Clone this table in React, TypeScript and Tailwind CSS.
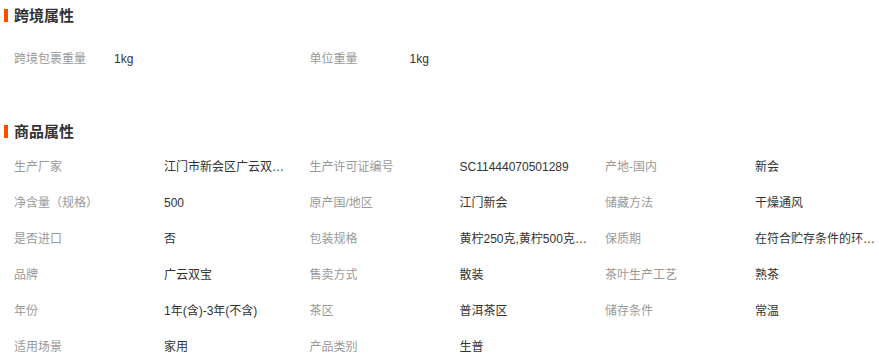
import React from "react";

const font = { fontFamily: '"Liberation Sans", "Noto Sans CJK SC", sans-serif' };

type Item = [string, string];

const cross: Item[] = [
  ["跨境包裹重量", "1kg"],
  ["单位重量", "1kg"],
];

const goods: Item[] = [
  ["生产厂家", "江门市新会区广云双宝茶叶有限公司"],
  ["生产许可证编号", "SC11444070501289"],
  ["产地-国内", "新会"],
  ["净含量（规格）", "500"],
  ["原产国/地区", "江门新会"],
  ["储藏方法", "干燥通风"],
  ["是否进口", "否"],
  ["包装规格", "黄柠250克,黄柠500克,青柠250克"],
  ["保质期", "在符合贮存条件的环境下长期保存"],
  ["品牌", "广云双宝"],
  ["售卖方式", "散装"],
  ["茶叶生产工艺", "熟茶"],
  ["年份", "1年(含)-3年(不含)"],
  ["茶区", "普洱茶区"],
  ["储存条件", "常温"],
  ["适用场景", "家用"],
  ["产品类别", "生普"],
];

function Header({ title, cls }: { title: string; cls: string }) {
  return (
    <div className={`flex items-center pl-[4px] ${cls}`}>
      <div className="w-[4px] h-[13px] bg-[#ff4a00]" />
      <div className="ml-[6px] text-[15px] font-bold text-[#333333] leading-none">{title}</div>
    </div>
  );
}

export default function App() {
  return (
    <div className="w-[879px] h-[360px] bg-white overflow-hidden" style={font}>
      <Header title="跨境属性" cls="h-[31px]" />
      <div className="flex pl-[14px] mt-[10px]">
        {cross.map(([k, v]) => (
          <div key={k} className="flex w-[295.5px] h-[36px] items-center text-[12px]">
            <div className="w-[100px] text-[#999999]">{k}</div>
            <div className="text-[#333333]">{v}</div>
          </div>
        ))}
      </div>
      <Header title="商品属性" cls="h-[31px] mt-[39px]" />
      <div className="grid grid-cols-[295.5px_295.5px_278px] pl-[14px] mt-[2px] overflow-hidden">
        {goods.map(([k, v]) => (
          <div key={k} className="flex h-[36px] items-center text-[12px]">
            <div className="w-[150px] shrink-0 text-[#999999]">{k}</div>
            <div className="w-[128px] shrink-0 truncate text-[#333333]">{v}</div>
          </div>
        ))}
      </div>
    </div>
  );
}
